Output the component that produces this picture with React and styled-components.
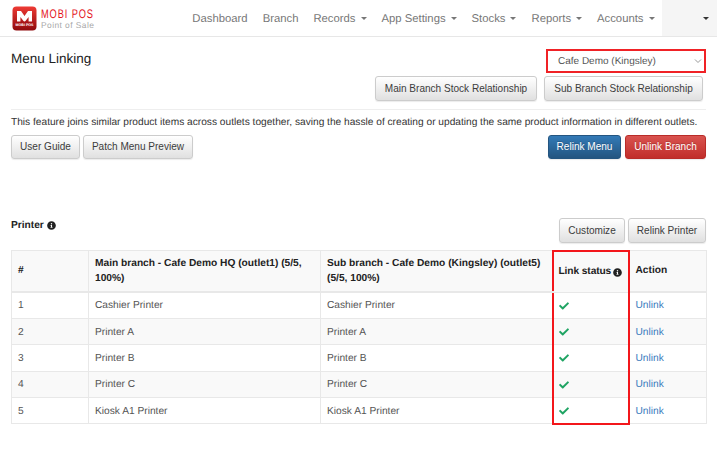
import styled, { createGlobalStyle } from "styled-components";
import { FaCheck, FaInfoCircle } from "react-icons/fa";

const printers = ["Cashier Printer", "Printer A", "Printer B", "Printer C", "Kiosk A1 Printer"];
const navItems = [
  { label: "Dashboard" },
  { label: "Branch" },
  { label: "Records", caret: true },
  { label: "App Settings", caret: true },
  { label: "Stocks", caret: true },
  { label: "Reports", caret: true },
  { label: "Accounts", caret: true },
];

const GlobalStyle = createGlobalStyle`
  html, body { margin: 0; padding: 0; background: #fff; }
  body {
    font-family: "Liberation Sans", Arial, sans-serif;
    font-size: 10.05px;
    color: #333;
    text-rendering: geometricPrecision;
  }
`;

const Navbar = styled.nav`
  display: flex;
  align-items: stretch;
  height: 36px;
  border-bottom: 1px solid #e7e7e7;
`;

const Brand = styled.div`
  display: flex;
  align-items: center;
  gap: 4px;
  padding-left: 12px;
`;

const BrandText = styled.div`
  display: flex;
  flex-direction: column;
  gap: 2px;
  margin-top: 3px;
  line-height: 9px;
`;

const BrandName = styled.span`
  font-size: 12.5px;
  color: #e4121c;
  letter-spacing: 1.2px;
  white-space: nowrap;
  transform: scaleX(0.74);
  transform-origin: left center;
`;

const BrandSub = styled.span`
  font-size: 8.4px;
  color: #a8a8a8;
  letter-spacing: 0.45px;
`;

const NavList = styled.div`
  display: flex;
  align-items: center;
  margin-left: auto;
  padding-top: 1px;
`;

const NavLink = styled.a`
  display: flex;
  align-items: center;
  padding: 0 7.5px;
  color: #777;
  font-size: 11.3px;
`;

const Caret = styled.span`
  display: inline-block;
  margin-left: 5px;
  border-top: 3px solid ${(p) => p.color || "#777"};
  border-left: 3px solid transparent;
  border-right: 3px solid transparent;
`;

const UserMenu = styled.div`
  display: flex;
  align-items: center;
  justify-content: flex-end;
  width: 55px;
  padding-right: 8px;
  box-sizing: border-box;
  background: #f5f5f5;
`;

const Page = styled.main`
  padding: 0 11px;
`;

const HeaderBlock = styled.header`
  display: flex;
  justify-content: space-between;
  align-items: flex-start;
  padding-top: 12px;
  padding-bottom: 8px;
  border-bottom: 1px solid #eee;
`;

const Title = styled.h1`
  margin: 2px 0 0;
  font-size: 13.5px;
  font-weight: 400;
  line-height: 16px;
  color: #222;
`;

const HeaderControls = styled.div`
  display: flex;
  flex-direction: column;
  align-items: flex-end;
  gap: 3px;
`;

const SelectBox = styled.div`
  position: relative;
  display: flex;
  align-items: center;
  width: 160px;
  height: 24px;
  box-sizing: border-box;
  padding-left: 10px;
  border: 2px solid #f02226;
  font-size: 10px;
  color: #555;
`;

const Chevron = styled.svg`
  position: absolute;
  right: 2px;
  top: 7px;
`;

const ButtonRow = styled.div`
  display: flex;
  gap: ${(p) => p.gap || 4}px;
  padding-right: ${(p) => p.inset || 0}px;
`;

const variants = {
  default: { top: "#fff", bottom: "#e0e0e0", border: "#ccc", color: "#3c3c3c", shadow: "none" },
  primary: { top: "#337ab7", bottom: "#245580", border: "#245580", color: "#fff", shadow: "0 -1px 0 rgba(0,0,0,.2)" },
  danger: { top: "#d9534f", bottom: "#c12e2a", border: "#b92c28", color: "#fff", shadow: "0 -1px 0 rgba(0,0,0,.2)" },
};

const Button = styled.button`
  height: 24.5px;
  width: ${(p) => p.$width}px;
  padding: 0;
  border-radius: 3px;
  border: 1px solid ${(p) => variants[p.$kind || "default"].border};
  background: linear-gradient(
    to bottom,
    ${(p) => variants[p.$kind || "default"].top} 0%,
    ${(p) => variants[p.$kind || "default"].bottom} 100%
  );
  color: ${(p) => variants[p.$kind || "default"].color};
  text-shadow: ${(p) => variants[p.$kind || "default"].shadow};
  font-family: inherit;
  font-size: 10.05px;
  white-space: nowrap;
  box-shadow: 0 1px 1px rgba(0, 0, 0, 0.08);
`;

const Intro = styled.p`
  margin: 0;
  padding-top: 6px;
  line-height: 14px;
  font-size: 10.17px;
  white-space: nowrap;
  color: #333;
`;

const ActionBar = styled.div`
  display: flex;
  justify-content: space-between;
  margin-top: 5px;
`;

const PrinterHead = styled.div`
  display: flex;
  justify-content: space-between;
  align-items: flex-start;
  margin-top: 59px;
`;

const SectionLabel = styled.div`
  display: flex;
  align-items: center;
  gap: 3px;
  font-weight: 700;
  font-size: 10.2px;
  color: #222;
  margin-top: 2px;
`;

const Table = styled.table`
  width: 695px;
  margin-top: 7px;
  table-layout: fixed;
  border-collapse: collapse;
  font-size: 10.2px;
`;

const Cell = styled.td`
  height: 26.4px;
  box-sizing: border-box;
  padding: 1px 6px 0;
  border: 1px solid #e8e8e8;
  color: #555;
  background: ${(p) => (p.$striped ? "#f9f9f9" : "#fff")};
  ${(p) => p.$mark && "padding: 1px 5px 0; border-left: 2px solid #f3161b; border-right: 2px solid #f3161b;"}
  ${(p) => p.$last && p.$mark && "border-bottom: 2px solid #f3161b;"}
`;

const HeadCell = styled.th`
  height: 41.5px;
  box-sizing: border-box;
  padding: 1px 6px 0;
  border: 1px solid #e8e8e8;
  border-bottom-width: 2px;
  background: #f9f9f9;
  text-align: left;
  line-height: 14.5px;
  font-weight: 700;
  color: #222;
  ${(p) => p.$mark && "padding: 1px 5px 0; border: 2px solid #f3161b; border-bottom: 1px solid #e8e8e8;"}
`;

const StatusLabel = styled.span`
  display: inline-flex;
  align-items: center;
  gap: 2px;
  white-space: nowrap;
  letter-spacing: -0.1px;
`;

const UnlinkLink = styled.a`
  color: #3a7cbd;
`;

const Tick = styled(FaCheck)`
  display: block;
  color: #1fa463;
`;

const Logo = () => (
  <svg width="25" height="25" viewBox="0 0 25 25">
    <defs>
      <linearGradient id="logoRed" x1="0" y1="0" x2="0" y2="1">
        <stop offset="0" stopColor="#ee3a34" />
        <stop offset="1" stopColor="#8f0a0d" />
      </linearGradient>
    </defs>
    <rect x="0.5" y="0.5" width="24" height="24" rx="4" fill="url(#logoRed)" />
    <path d="M5 19V5h4l3.5 5L16 5h4v14h-3.4v-8l-4.1 5.3L8.4 11v8z" fill="#fff" />
    <rect x="4.5" y="15.5" width="16" height="5" fill="#a81317" />
    <text x="12.5" y="19.6" textAnchor="middle" fontSize="3.6" fontWeight="700" fill="#fff">MOBI POS</text>
  </svg>
);

const App = () => (
  <>
    <GlobalStyle />
    <Navbar>
      <Brand>
        <Logo />
        <BrandText>
          <BrandName>MOBI POS</BrandName>
          <BrandSub>Point of Sale</BrandSub>
        </BrandText>
      </Brand>
      <NavList>
        {navItems.map((item) => (
          <NavLink key={item.label}>
            {item.label}
            {item.caret && <Caret />}
          </NavLink>
        ))}
      </NavList>
      <UserMenu>
        <Caret color="#333" />
      </UserMenu>
    </Navbar>
    <Page>
      <HeaderBlock>
        <Title>Menu Linking</Title>
        <HeaderControls>
          <SelectBox>
            Cafe Demo (Kingsley)
            <Chevron width="8" height="6" viewBox="0 0 8 6">
              <path d="M1 1.5l3 3 3-3" fill="none" stroke="#999" strokeWidth="1" />
            </Chevron>
          </SelectBox>
          <ButtonRow gap={7} inset={3}>
            <Button $width={162}>Main Branch Stock Relationship</Button>
            <Button $width={159}>Sub Branch Stock Relationship</Button>
          </ButtonRow>
        </HeaderControls>
      </HeaderBlock>
      <Intro>
        This feature joins similar product items across outlets together, saving the hassle of creating or updating the same product information in different outlets.
      </Intro>
      <ActionBar>
        <ButtonRow gap={3}>
          <Button $width={69}>User Guide</Button>
          <Button $width={110}>Patch Menu Preview</Button>
        </ButtonRow>
        <ButtonRow gap={4}>
          <Button $width={73} $kind="primary">Relink Menu</Button>
          <Button $width={81} $kind="danger">Unlink Branch</Button>
        </ButtonRow>
      </ActionBar>
      <PrinterHead>
        <SectionLabel>
          Printer <FaInfoCircle size={9} />
        </SectionLabel>
        <ButtonRow gap={3}>
          <Button $width={66}>Customize</Button>
          <Button $width={78}>Relink Printer</Button>
        </ButtonRow>
      </PrinterHead>
      <Table>
        <colgroup>
          <col style={{ width: 77 }} />
          <col style={{ width: 232 }} />
          <col style={{ width: 232 }} />
          <col style={{ width: 76 }} />
          <col style={{ width: 78 }} />
        </colgroup>
        <thead>
          <tr>
            <HeadCell>#</HeadCell>
            <HeadCell>Main branch - Cafe Demo HQ (outlet1) (5/5, 100%)</HeadCell>
            <HeadCell>Sub branch - Cafe Demo (Kingsley) (outlet5) (5/5, 100%)</HeadCell>
            <HeadCell $mark>
              <StatusLabel>
                Link status <FaInfoCircle size={9} />
              </StatusLabel>
            </HeadCell>
            <HeadCell>Action</HeadCell>
          </tr>
        </thead>
        <tbody>
          {printers.map((name, i) => {
            const striped = i % 2 === 1;
            return (
              <tr key={name}>
                <Cell $striped={striped}>{i + 1}</Cell>
                <Cell $striped={striped}>{name}</Cell>
                <Cell $striped={striped}>{name}</Cell>
                <Cell $striped={striped} $mark $last={i === printers.length - 1}>
                  <Tick size={10} />
                </Cell>
                <Cell $striped={striped}>
                  <UnlinkLink>Unlink</UnlinkLink>
                </Cell>
              </tr>
            );
          })}
        </tbody>
      </Table>
    </Page>
  </>
);

export default App;
